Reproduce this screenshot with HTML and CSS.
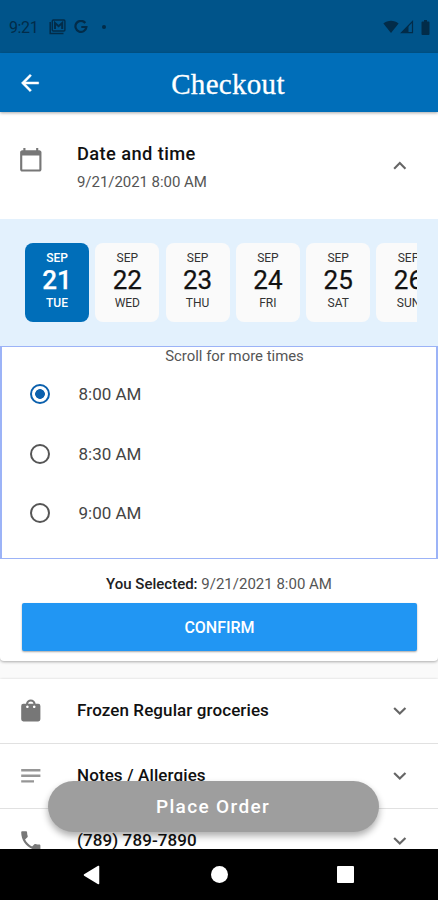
FILE: index.html
```html
<!DOCTYPE html>
<html lang="en">
<head>
<meta charset="utf-8">
<title>Checkout</title>
<link rel="stylesheet" href="styles.css">
</head>
<body>
<div class="screen">
  <div class="status">
    <span class="clock">9:21</span>
    <svg class="mail" width="18" height="16" viewBox="0 0 18 16"><path d="M1.200 3v11.500h13.300" fill="none" stroke="currentColor" stroke-width="1.500"/><rect x="3.300" y="1" width="12.600" height="11" rx="1" fill="none" stroke="currentColor" stroke-width="1.400"/><path d="M6 10V4l3.600 3.200L13.200 4v6" fill="none" stroke="currentColor" stroke-width="2"/></svg>
    <svg class="google" width="14" height="14" viewBox="0 0 14 14"><path d="M11.300 3A5.500 5.500 0 1 0 12.400 7H7.300" fill="none" stroke="currentColor" stroke-width="2.200"/></svg>
    <i class="dot"></i>
    <span class="signals">
      <svg width="16" height="14" viewBox="0 0 16 14"><path d="M.4 3.600C4.800-.1 11.200-.1 15.600 3.600L8 13z" fill="currentColor"/></svg>
      <svg width="14" height="14" viewBox="0 0 14 14"><path d="M1.500 12.700 12.500 1.500V12.700z" fill="none" stroke="currentColor" stroke-width="1.200"/><path d="M1 13 8.500 5.500V13z" fill="currentColor"/></svg>
      <svg class="battery" width="9" height="15" viewBox="0 0 9 15"><path d="M3 0h3v1.500h1.500q1 0 1 1V14q0 1-1 1h-6q-1 0-1-1V2.500q0-1 1-1H3z" fill="currentColor"/></svg>
    </span>
  </div>
  <header class="appbar">
    <svg class="back" width="26" height="26" viewBox="0 0 24 24"><path d="M20 11H7.830l5.590-5.590L12 4l-8 8 8 8 1.410-1.410L7.830 13H20z" fill="#fff" stroke="#fff" stroke-width=".4"/></svg>
    <h1>Checkout</h1>
  </header>
  <main class="content">
    <section class="card first">
      <div class="head">
        <svg class="icon" viewBox="0 0 24 24"><path d="M20 3h-1V1h-2v2H7V1H5v2H4c-1.100 0-2 .9-2 2v16c0 1.100.9 2 2 2h16c1.100 0 2-.9 2-2V5c0-1.100-.9-2-2-2zm0 18H4V8h16z"/></svg>
        <div class="titles"><h2 class="date-title">Date and time</h2><p>9/21/2021 8:00 AM</p></div>
        <svg class="chevron" viewBox="0 0 24 24"><path d="M12 8l-6 6 1.410 1.410L12 10.830l4.590 4.580L18 14z"/></svg>
      </div>
      <div class="strip"><div class="days">
        <div class="day selected"><span>SEP</span><b>21</b><span>TUE</span></div>
        <div class="day"><span>SEP</span><b>22</b><span>WED</span></div>
        <div class="day"><span>SEP</span><b>23</b><span>THU</span></div>
        <div class="day"><span>SEP</span><b>24</b><span>FRI</span></div>
        <div class="day"><span>SEP</span><b>25</b><span>SAT</span></div>
        <div class="day"><span>SEP</span><b>26</b><span>SUN</span></div>
      </div></div>
      <div class="times">
        <p class="hint">Scroll for more times</p>
        <div class="time"><i class="radio on"></i><span>8:00 AM</span></div>
        <div class="time"><i class="radio"></i><span>8:30 AM</span></div>
        <div class="time"><i class="radio"></i><span>9:00 AM</span></div>
      </div>
      <p class="choice"><b>You Selected:</b> 9/21/2021 8:00 AM</p>
      <button class="confirm">CONFIRM</button>
    </section>
    <section class="card">
      <div class="row">
        <svg class="icon bag" viewBox="0 0 24 24"><path fill-rule="evenodd" d="M7.500 5.500C7.800 3 9.600 1.500 12 1.500s4.200 1.500 4.500 4H19q2 0 2 2V20q0 2-2 2H5q-2 0-2-2V7.500q0-2 2-2zM9.500 5.500h5C14.200 4 13.300 3.300 12 3.300S9.800 4 9.500 5.500zM8.800 7a1.200 1.200 0 1 0 .01 0zM15.200 7a1.200 1.200 0 1 0 .01 0z"/></svg>
        <h2 class="frozen">Frozen Regular groceries</h2>
        <svg class="chevron" viewBox="0 0 24 24"><path d="M16.590 8.590 12 13.170 7.410 8.590 6 10l6 6 6-6z"/></svg>
      </div>
      <div class="row">
        <svg class="icon light" viewBox="0 0 24 24"><path d="M3 5.700h18v2.200H3zM3 10.900h18v2.200H3zM3 16.100h12v2.200H3z"/></svg>
        <h2 class="notes">Notes / Allergies</h2>
        <svg class="chevron" viewBox="0 0 24 24"><path d="M16.590 8.590 12 13.170 7.410 8.590 6 10l6 6 6-6z"/></svg>
      </div>
      <div class="row">
        <svg class="icon" viewBox="0 0 24 24"><path d="M6.620 10.790c1.440 2.830 3.760 5.140 6.590 6.590l2.200-2.200c.27-.27.67-.36 1.020-.24 1.120.37 2.330.57 3.570.57.55 0 1 .45 1 1V20c0 .55-.45 1-1 1C10.610 21 3 13.390 3 4c0-.55.45-1 1-1h3.500c.55 0 1 .45 1 1 0 1.250.2 2.450.57 3.570.11.35.03.74-.25 1.020z"/></svg>
        <h2 class="phone">(789) 789-7890</h2>
        <svg class="chevron" viewBox="0 0 24 24"><path d="M16.590 8.590 12 13.170 7.410 8.590 6 10l6 6 6-6z"/></svg>
      </div>
    </section>
    <button class="order">Place Order</button>
  </main>
  <nav class="navbar">
    <svg width="18" height="20" viewBox="0 0 18 20"><path d="M1.500 10 15.500 1.500v17z" fill="#fff" stroke="#fff" stroke-width="1.500" stroke-linejoin="round"/></svg>
    <i class="home"></i>
    <i class="recent"></i>
  </nav>
</div>
</body>
</html>
```
FILE: styles.css
```css
* { box-sizing: border-box; margin: 0; padding: 0; }
body { font-family: Roboto, sans-serif; color: #111; background: #fafafa; }
svg { display: block; flex: none; }
i { display: block; flex: none; }
button { border: 0; color: #fff; font-family: inherit; }
.screen { width: 438px; height: 900px; display: flex; flex-direction: column; overflow: hidden; }
.status { height: 53px; flex: none; background: #00548a; color: #022c49; display: flex; align-items: center; padding: 1px 8px 0 9px; }
.clock { font-size: 16px; width: 40px; letter-spacing: -.4px; }
.google { margin-left: 7px; }
.dot { width: 4px; height: 4px; border-radius: 50%; background: currentColor; margin-left: 14px; }
.signals { display: flex; align-items: center; gap: 1px; margin-left: auto; }
.battery { margin-left: 6px; }
.appbar { height: 59px; flex: none; background: #006eb9; display: grid; grid-template-columns: 42px 1fr 41px; align-items: center; padding: 0 0 0 17px; box-shadow: 0 1px 3px rgba(0,0,0,.35); z-index: 1; }
h1 { color: #fff; font: 400 29px/40px "Liberation Serif", serif; text-align: center; letter-spacing: .3px; padding-top: 2px; -webkit-text-stroke: .3px #fff; }
.content { height: 737px; flex: none; overflow: hidden; position: relative; }
.card { background: #fff; box-shadow: 0 1px 3px rgba(0,0,0,.32); }
.first { height: 549px; border-radius: 0 0 4px 4px; margin-bottom: 18px; }
.icon { width: 25.600px; height: 25.600px; fill: #777; margin-right: 33.900px; }
.icon.light { fill: #969696; }
.chevron { width: 25.600px; height: 25.600px; fill: #666; margin-left: auto; }
.head, .row { display: flex; align-items: center; padding: 0 25px 0 17.500px; }
.head { height: 107px; }
.head .icon { margin-top: -12px; }
h2 { font-size: 17px; font-weight: 500; letter-spacing: .1px; line-height: 24px; }
.date-title { font-size: 18.300px; letter-spacing: .4px; }
.titles p { font-size: 15px; line-height: 20px; color: #555; margin-top: 6px; letter-spacing: -.05px; }
.titles { padding-top: 2px; }
.strip { height: 127px; background: #e3f1fd; padding: 24px 21px 0 25px; }
.days { display: flex; gap: 6.300px; overflow: hidden; }
.day { width: 64px; height: 79px; flex: none; border-radius: 8px; background: #fafafa; display: flex; flex-direction: column; align-items: center; padding-top: 7px; }
.day span { font-size: 12px; line-height: 16px; color: #333; }
.day b { font-size: 26px; font-weight: 400; line-height: 29px; -webkit-text-stroke: .25px currentColor; }
.day.selected { background: #006eb9; }
.day.selected span, .day.selected b { color: #fff; font-weight: 500; }
.times { height: 213px; border: 1px solid #9cb3f7; border-width: 1px 2px; }
.hint { text-align: center; font-size: 14.900px; line-height: 19px; height: 17.500px; color: #555; padding-left: 31px; }
.time { height: 59.600px; display: flex; align-items: center; padding-left: 28px; font-size: 17px; color: #444; }
.time span { margin-left: 28.500px; }
.radio { width: 20px; height: 20px; border: 2px solid #555; border-radius: 50%; }
.radio.on { border-color: #0b60ad; background: radial-gradient(circle, #0b60ad 0 4.500px, #fff 5.200px); }
.choice { text-align: center; font-size: 15px; line-height: 20px; color: #555; padding-top: 15px; }
.choice b { color: #222; font-weight: 500; }
.confirm { display: block; width: 395px; height: 48px; margin: 9px 0 0 22px; border-radius: 2px; background: #2196f3; box-shadow: 0 1px 2px rgba(0,0,0,.35); font-size: 16px; font-weight: 500; }
.row { height: 65px; border-bottom: 1px solid #e1e1e1; }
.row h2 { margin-top: -2px; }
.row svg { margin-top: -1px; }
.order { position: absolute; left: 48px; top: 669px; width: 331px; height: 51px; border-radius: 26px; background: #9e9e9e; box-shadow: 0 4px 7px rgba(0,0,0,.32); font-size: 19px; font-weight: 500; letter-spacing: 1.350px; padding-right: 1px; }
.navbar { height: 51px; flex: none; background: #000; display: flex; align-items: center; padding-left: 83px; }
.home { width: 17px; height: 17px; border-radius: 50%; background: #fff; margin-left: 110px; }
.recent { width: 17px; height: 17px; border-radius: 1px; background: #fff; margin-left: 109px; }
```
